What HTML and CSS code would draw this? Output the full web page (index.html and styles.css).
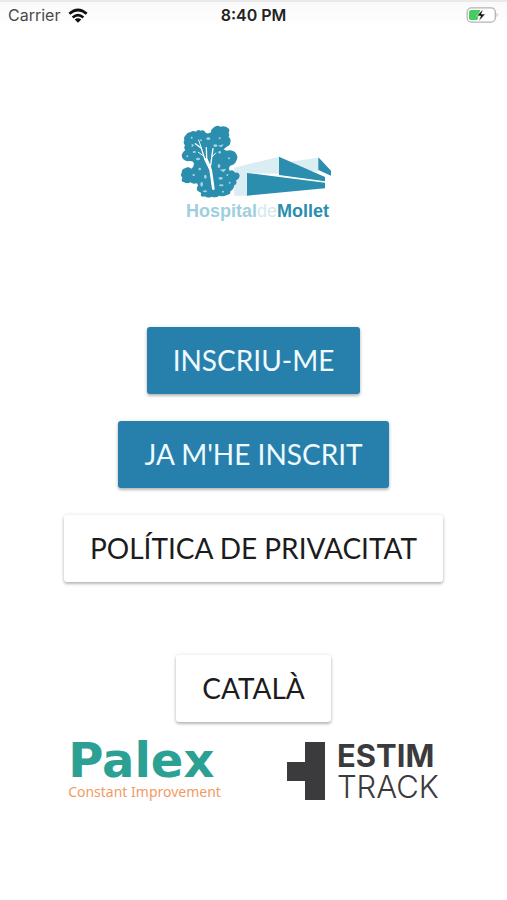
FILE: index.html
```html
<!DOCTYPE html>
<html lang="ca">
<head>
<meta charset="utf-8">
<meta name="viewport" content="width=device-width, initial-scale=1">
<title>Hospital de Mollet</title>
<link rel="stylesheet" href="styles.css">
</head>
<body>
<header class="status">
  <div class="carrier">
    <span>Carrier</span>
    <svg class="wifi" viewBox="0 0 60 44" aria-hidden="true">
      <path d="M4 17Q30-6 56 17" fill="none" stroke="#111" stroke-width="8"/>
      <path d="M14 28Q30 14 46 28" fill="none" stroke="#111" stroke-width="8"/>
      <path d="M20 34Q30 26 40 34L30 44Z" fill="#111"/>
    </svg>
  </div>
  <time class="clock">8:40 PM</time>
  <div class="power">
    <svg class="battery" viewBox="0 0 100 50" aria-hidden="true">
      <rect x="2" y="3" width="88" height="44" rx="13" fill="#fff" stroke="#b4b4b4" stroke-width="4"/>
      <path d="M14 9H43L34 41H14Q8 41 8 35V15Q8 9 14 9Z" fill="#43cc62"/>
      <path d="M94 18Q100 25 94 32Z" fill="#b4b4b4"/>
      <path d="M52 6L32 28H44L38 45L59 22H47Z" fill="#111" stroke="#fff" stroke-width="2"/>
    </svg>
  </div>
</header>
<main class="page">
  <div class="brand">
    <svg class="brand-art" viewBox="0 0 510 258" aria-hidden="true">
      <path d="M190 158L325 125V176L228 174V242H190Z" fill="#d9edf2"/>
      <path d="M345 142L442 128V172L372 158Z" fill="#d9edf2"/>
      <path d="M324 125L462 186V199L324 180Z" fill="#2b8eae"/>
      <path d="M442 127L480 167V182L442 165Z" fill="#2b8eae"/>
      <path d="M228 174L462 203V220L228 242Z" fill="#2b8eae"/>
      <path fill="#2b8eae" d="M127 38Q138 29 148 35Q162 31 171 39Q178 44 173 53Q177 59 173 66Q181 72 178 82Q178 91 169 94L158 103Q166 110 175 106Q190 106 196 117Q202 126 196 137Q192 148 181 151Q170 156 176 167Q188 162 192 173Q204 170 206 182Q204 193 195 196Q200 207 190 211Q188 224 178 229Q180 238 168 240Q155 246 145 242Q134 250 122 245Q111 251 101 244Q91 248 89 240Q93 234 86 231Q75 228 78 217Q84 212 77 205Q66 209 58 202Q49 208 39 202Q28 199 34 188Q27 181 32 173Q32 162 42 160Q51 153 61 161Q68 158 69 145Q65 136 55 138Q43 140 36 132Q29 122 35 114Q38 108 43 106Q37 99 42 91Q35 84 40 76Q37 66 45 60Q49 50 58 52Q66 45 75 50Q79 42 89 47Q99 43 104 53Q110 58 120 52Q119 43 127 38Z"/>
      <g fill="none" stroke="#fff" stroke-linecap="round" stroke-linejoin="round">
        <path d="M126 221L119 164L101 131L91 100L73 86M119 158L107 130L106 98M119 151L123 121L126 101" stroke-width="4"/>
        <path d="M127 221L119 165L104 133" stroke-width="8"/>
        <path d="M91 99L83 75M98 123L82 112M123 126L134 114" stroke-width="3"/>
      </g>
      <g fill="#a5d2df">
        <ellipse cx="112" cy="71" rx="6" ry="4"/><circle cx="90" cy="76" r="3"/><circle cx="62" cy="68" r="3"/>
        <ellipse cx="133" cy="92" rx="6" ry="4"/><circle cx="146" cy="70" r="3"/><ellipse cx="70" cy="111" rx="5" ry="3"/>
        <circle cx="146" cy="112" r="4"/><circle cx="174" cy="130" r="3"/><ellipse cx="81" cy="132" rx="6" ry="4"/>
        <ellipse cx="144" cy="153" rx="4" ry="6"/><circle cx="86" cy="162" r="4"/><ellipse cx="68" cy="180" rx="4" ry="3"/>
        <ellipse cx="103" cy="185" rx="4" ry="6"/><ellipse cx="149" cy="190" rx="6" ry="4"/><circle cx="169" cy="180" r="3"/>
        <ellipse cx="92" cy="208" rx="4" ry="7"/><ellipse cx="151" cy="211" rx="7" ry="3"/><circle cx="176" cy="203" r="3"/>
        <ellipse cx="102" cy="229" rx="6" ry="3"/><circle cx="156" cy="230" r="3"/><circle cx="49" cy="124" r="3"/>
        <path d="M140 92L158 88L152 97ZM146 164L166 161L158 172ZM62 86L70 91L62 97Z"/>
      </g>
    </svg>
    <p class="brand-name"><span class="soft">Hospital</span><span class="faint">de</span><span>Mollet</span></p>
  </div>
  <div class="actions">
    <button class="btn primary" type="button">INSCRIU-ME</button>
    <button class="btn primary" type="button">JA M'HE INSCRIT</button>
    <button class="btn" type="button">POLÍTICA DE PRIVACITAT</button>
  </div>
  <button class="btn language" type="button">CATALÀ</button>
  <footer class="partners">
    <div class="palex">
      <p class="palex-name">Palex</p>
      <p class="palex-tag">Constant Improvement</p>
    </div>
    <div class="estim">
      <svg class="estim-mark" viewBox="0 0 38 58" aria-hidden="true"><path d="M18 0H38V58H18V39H0V20H18Z" fill="#3b3b3d"/></svg>
      <p class="estim-name"><strong>ESTIM</strong><span>TRACK</span></p>
    </div>
  </footer>
</main>
</body>
</html>
```
FILE: styles.css
```css
* {
  box-sizing: border-box;
}

body {
  margin: 0;
  min-height: 100vh;
  background: #fff;
  color: #1c1c1c;
  font-family: Lato, "Liberation Sans", sans-serif;
}

p {
  margin: 0;
}

.status {
  display: grid;
  grid-template-columns: 1fr auto 1fr;
  align-items: center;
  height: 28px;
  padding: 0 8px;
  border-top: 2px solid #e9e9e9;
  background: linear-gradient(#fafafa, #fff);
  font: 16px/24px Inter, sans-serif;
}

.carrier {
  display: flex;
  align-items: center;
  gap: 8px;
  color: #4a4a4a;
}

.wifi {
  width: 20px;
  height: 15px;
}

.clock {
  color: #222;
  font-weight: 600;
}

.power {
  display: flex;
  justify-content: flex-end;
}

.battery {
  width: 33px;
  height: 16px;
}

.page {
  display: flex;
  flex-direction: column;
  align-items: center;
  padding: 87px 16px 40px;
}

.brand {
  display: flex;
  flex-direction: column;
  align-items: center;
  padding-left: 4px;
}

.brand-art {
  width: 170px;
  height: 86px;
}

.brand-name {
  padding-left: 4px;
  color: #2b8eae;
  font: bold 18px/20px "Liberation Sans", sans-serif;
}

.soft {
  color: #9fcfde;
}

.faint {
  color: #d3e9f0;
  font-weight: normal;
}

.actions {
  display: flex;
  flex-direction: column;
  align-items: center;
  gap: 27px;
  margin-top: 106px;
}

.btn {
  padding: 16px 26px;
  border: 0;
  border-radius: 3px;
  background: #fff;
  box-shadow: 0 2px 3px rgba(0, 0, 0, 0.25), 0 0 4px rgba(0, 0, 0, 0.1);
  color: #1c1c1c;
  font: 28px/35px Lato, sans-serif;
}

.primary {
  background: #2780ab;
  color: #effaff;
}

.language {
  margin-top: 73px;
}

.partners {
  display: flex;
  justify-content: center;
  align-items: flex-start;
  gap: 66px;
  margin-top: 18px;
}

.palex-name {
  color: #2ca093;
  font: bold 48px/40px "DejaVu Sans", sans-serif;
}

.palex-tag {
  color: #f39a64;
  font: 14px/24px "Noto Sans", sans-serif;
}

.estim {
  display: flex;
  align-items: center;
  gap: 12px;
  color: #3b3b3d;
}

.estim-mark {
  width: 38px;
  height: 58px;
}

.estim-name {
  display: flex;
  flex-direction: column;
  font: 300 31px/31px Inter, sans-serif;
}

.estim-name strong {
  font-weight: 700;
}
```
